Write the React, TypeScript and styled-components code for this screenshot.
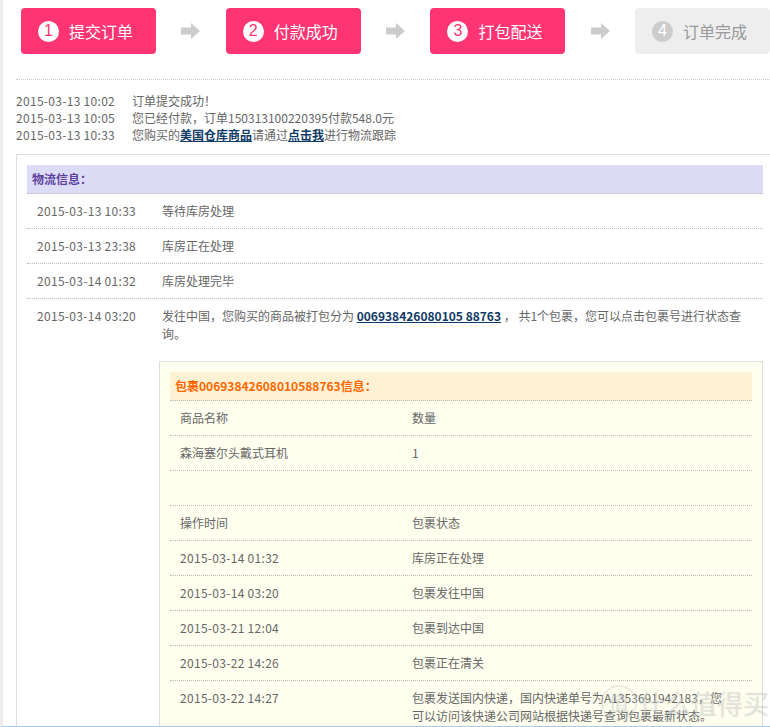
import React from 'react';
import styled, { createGlobalStyle } from 'styled-components';

const GlobalStyle = createGlobalStyle`
  html, body { margin: 0; padding: 0; background: #fff; }
  body {
    font-family: "Microsoft YaHei", "Noto Sans CJK SC", "Noto Sans", sans-serif;
    font-size: 12px;
    color: #666;
  }
`;

const Page = styled.div`
  position: relative;
  height: 727px;
  box-sizing: border-box;
  overflow: hidden;
  border-left: 3px solid #ececec;
  border-bottom: 1px solid #a9c9f3;
  padding-left: 13px;
`;

const Steps = styled.div`
  display: flex;
  align-items: center;
  padding: 8px 0 0 5px;
`;

const Step = styled.div<{ $done: boolean }>`
  display: flex;
  align-items: center;
  gap: 10px;
  flex: 0 0 135px;
  height: 46px;
  box-sizing: border-box;
  padding-left: 17px;
  border-radius: 4px;
  background: ${p => (p.$done ? '#ff3473' : '#eeeeee')};
  color: ${p => (p.$done ? '#fff' : '#999')};
  font-size: 16px;
`;

const StepNum = styled.span<{ $done: boolean }>`
  display: inline-flex;
  align-items: center;
  justify-content: center;
  width: 21px;
  height: 21px;
  border-radius: 50%;
  background: ${p => (p.$done ? '#fff' : '#cccccc')};
  color: ${p => (p.$done ? '#ff3473' : '#fff')};
  font-family: "Liberation Sans", sans-serif;
  font-size: 16px;
  line-height: 1;
`;

const ArrowCell = styled.div`
  flex: 0 0 69.7px;
  display: flex;
  justify-content: center;
`;

const Divider = styled.div`
  margin-top: 25px;
  width: 780px;
  border-top: 1px dotted #c8c8c8;
`;

const Logs = styled.div`
  margin-top: 12px;
`;

const LogLine = styled.div`
  display: grid;
  grid-template-columns: 116px 1fr;
  line-height: 17px;
  white-space: nowrap;
`;

const Stamp = styled.span`
  letter-spacing: 0.3px;
`;

const Link = styled.a`
  color: #0f3a66;
  font-weight: bold;
  text-decoration: underline;
  cursor: pointer;
`;

const Box = styled.div`
  margin-top: 11px;
  width: 736px;
  padding: 10px;
  border: 1px solid #dddddd;
`;

const Head = styled.div<{ $tone: 'purple' | 'orange' }>`
  height: 28px;
  line-height: 28px;
  padding-left: 5px;
  font-weight: bold;
  border-bottom: 1px dotted #bbbbbb;
  background: ${p => (p.$tone === 'purple' ? '#dcdcf7' : '#fff2d4')};
  color: ${p => (p.$tone === 'purple' ? '#5e3f9e' : '#ff6600')};
`;

const Row = styled.div`
  display: grid;
  grid-template-columns: 132px 1fr;
  border-bottom: 1px dotted #bbbbbb;
`;

const Cell = styled.div<{ $first?: boolean }>`
  padding: 8px ${p => (p.$first ? '0 8px 10px' : '10px 8px 3px')};
  line-height: 18px;
`;

const Package = styled.div`
  margin-top: 18px;
  margin-left: -3px;
  width: 582px;
  padding: 10px;
  border: 1px solid #dddddd;
  background: #fffff0;
`;

const PkgRow = styled.div`
  display: grid;
  grid-template-columns: 232px 1fr;
  border-bottom: 1px dotted #bbbbbb;
`;

const PkgCell = styled.div`
  padding: 8px 10px;
  line-height: 18px;
  min-height: 18px;
`;

const Watermark = styled.div`
  position: absolute;
  left: 598px;
  top: 684px;
  display: flex;
  align-items: center;
  gap: 2px;
  color: rgba(255, 255, 255, 0.45);
  font-size: 26px;
  text-shadow: 0 0 1px rgba(0, 0, 0, 0.22);
  pointer-events: none;
`;

const MarkBadge = styled.span`
  display: inline-flex;
  align-items: center;
  justify-content: center;
  width: 32px;
  height: 32px;
  border-radius: 50%;
  border: 2px solid rgba(210, 210, 210, 0.45);
  font-size: 20px;
`;

const Arrow = () => (
  <svg width="19" height="16" viewBox="0 0 19 16">
    <path d="M0 4.5h10V0l9 8-9 8v-4.5H0z" fill="#cccccc" />
  </svg>
);

const steps = ['提交订单', '付款成功', '打包配送', '订单完成'];

const logistics = [
  ['2015-03-13 10:33', '等待库房处理'],
  ['2015-03-13 23:38', '库房正在处理'],
  ['2015-03-14 01:32', '库房处理完毕'],
];

const tracking = [
  ['2015-03-14 01:32', '库房正在处理'],
  ['2015-03-14 03:20', '包裹发往中国'],
  ['2015-03-21 12:04', '包裹到达中国'],
  ['2015-03-22 14:26', '包裹正在清关'],
];

const PKG = '006938426080105 88763';

export default function App() {
  return (
    <>
      <GlobalStyle />
      <Page>
        <Steps>
          {steps.map((s, i) => (
            <React.Fragment key={s}>
              {i > 0 && (
                <ArrowCell>
                  <Arrow />
                </ArrowCell>
              )}
              <Step $done={i < 3}>
                <StepNum $done={i < 3}>{i + 1}</StepNum>
                {s}
              </Step>
            </React.Fragment>
          ))}
        </Steps>
        <Divider />
        <Logs>
          <LogLine>
            <Stamp>2015-03-13 10:02</Stamp>
            <span>订单提交成功！</span>
          </LogLine>
          <LogLine>
            <Stamp>2015-03-13 10:05</Stamp>
            <span>您已经付款，订单150313100220395付款548.0元</span>
          </LogLine>
          <LogLine>
            <Stamp>2015-03-13 10:33</Stamp>
            <span>
              您购买的<Link>美国仓库商品</Link>请通过<Link>点击我</Link>进行物流跟踪
            </span>
          </LogLine>
        </Logs>
        <Box>
          <Head $tone="purple">物流信息：</Head>
          {logistics.map(([t, s]) => (
            <Row key={t}>
              <Cell $first><Stamp>{t}</Stamp></Cell>
              <Cell>{s}</Cell>
            </Row>
          ))}
          <Row>
            <Cell $first><Stamp>2015-03-14 03:20</Stamp></Cell>
            <Cell>
              发往中国，您购买的商品被打包分为 <Link>{PKG}</Link> ， 共1个包裹，您可以点击包裹号进行状态查
              <br />
              询。
              <Package>
                <Head $tone="orange">包裹{PKG.replace(' ', '')}信息：</Head>
                <PkgRow>
                  <PkgCell>商品名称</PkgCell>
                  <PkgCell>数量</PkgCell>
                </PkgRow>
                <PkgRow>
                  <PkgCell>森海塞尔头戴式耳机</PkgCell>
                  <PkgCell>1</PkgCell>
                </PkgRow>
                <PkgRow>
                  <PkgCell />
                  <PkgCell />
                </PkgRow>
                <PkgRow>
                  <PkgCell>操作时间</PkgCell>
                  <PkgCell>包裹状态</PkgCell>
                </PkgRow>
                {tracking.map(([t, s]) => (
                  <PkgRow key={t}>
                    <PkgCell><Stamp>{t}</Stamp></PkgCell>
                    <PkgCell>{s}</PkgCell>
                  </PkgRow>
                ))}
                <PkgRow>
                  <PkgCell><Stamp>2015-03-22 14:27</Stamp></PkgCell>
                  <PkgCell>
                    包裹发送国内快递，国内快递单号为A1353691942183，您
                    <br />
                    可以访问该快递公司网站根据快递号查询包裹最新状态。
                  </PkgCell>
                </PkgRow>
              </Package>
            </Cell>
          </Row>
        </Box>
        <Watermark>
          <MarkBadge>值</MarkBadge>
          <span>什么值得买</span>
        </Watermark>
      </Page>
    </>
  );
}
